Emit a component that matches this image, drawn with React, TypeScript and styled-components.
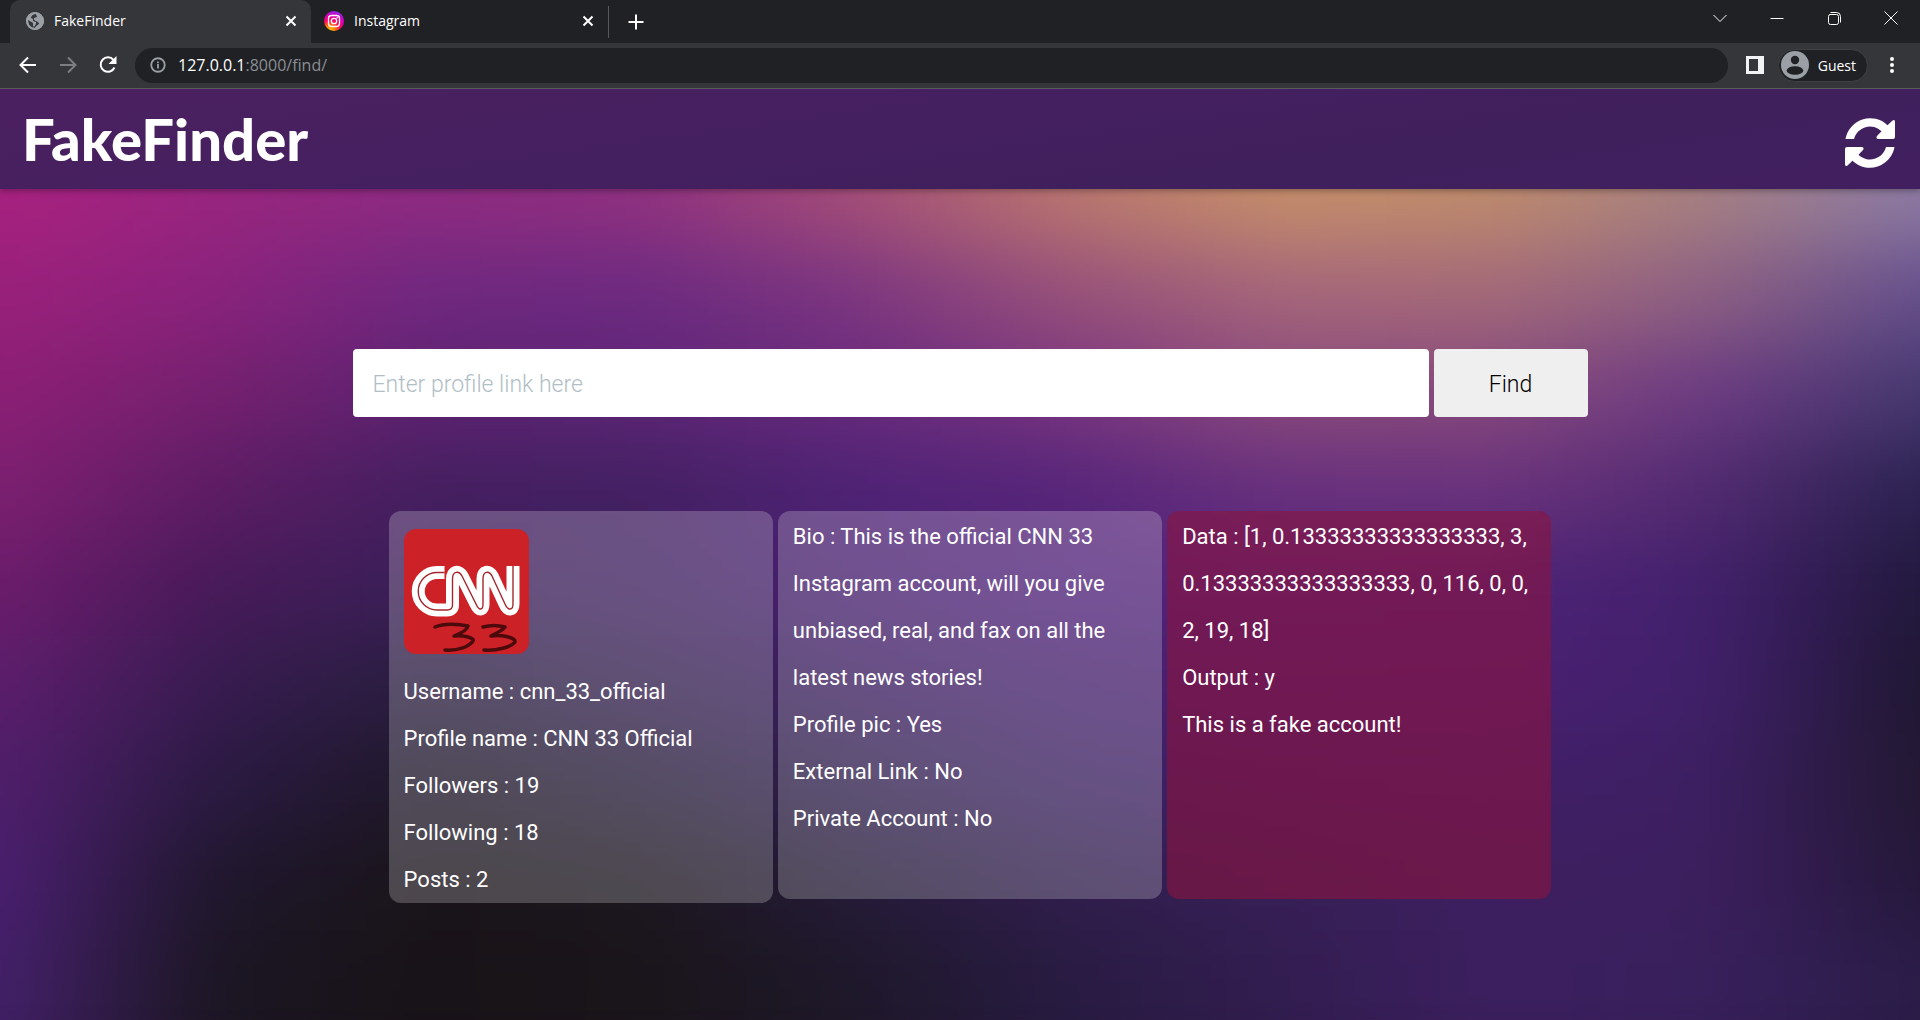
import React from "react";
import styled, { createGlobalStyle } from "styled-components";

const bodyFont = `Roboto, sans-serif`;
const chromeFont = `"Open Sans", "Noto Sans", sans-serif`;

const GlobalStyle = createGlobalStyle`
  *, *::before, *::after { box-sizing: border-box; }
  body { margin: 0; background: #19141a; color: #fff; font-family: ${bodyFont}; }
  button, input { font: inherit; }
`;

const Screen = styled.div`
  display: flex;
  flex-direction: column;
  min-height: 100vh;
`;

const TabStrip = styled.div`
  display: flex;
  align-items: center;
  height: 43px;
  padding-left: 10px;
  background: #202124;
  font-family: ${chromeFont};
`;

const Tab = styled.div<{ $active?: boolean }>`
  display: flex;
  align-items: center;
  gap: 10px;
  width: ${(p) => (p.$active ? 301 : 297)}px;
  height: 43px;
  padding: 0 10px 2px ${(p) => (p.$active ? 16 : 13)}px;
  border-radius: 10px 10px 0 0;
  background: ${(p) => (p.$active ? "#35363a" : "transparent")};
  font-size: 14px;
`;

const TabTitle = styled.span`
  flex: 1;
`;

const IconButton = styled.button<{ $w?: number }>`
  display: flex;
  align-items: center;
  justify-content: center;
  width: ${(p) => p.$w ?? 20}px;
  height: 36px;
  padding: 0;
  border: 0;
  background: none;
  color: #fff;
`;

const Divider = styled.div`
  width: 1px;
  height: 32px;
  background: #55575b;
`;

const WindowControls = styled.div`
  display: flex;
  align-self: flex-start;
  margin-left: auto;
`;

const Toolbar = styled.div`
  display: flex;
  align-items: center;
  height: 46px;
  padding: 0 8px 1px;
  background: #35363a;
  border-bottom: 1px solid #5a5b5f;
  font-family: ${chromeFont};
`;

const AddressBar = styled.div`
  display: flex;
  flex: 1;
  align-items: center;
  gap: 11px;
  height: 35px;
  margin: 0 14px 0 7px;
  padding: 0 14px;
  border-radius: 18px;
  background: #202124;
  color: #9aa0a6;
  font-size: 16px;
`;

const Host = styled.span`
  color: #fff;
`;

const Address = styled.a`
  color: #8b8f94;
  text-decoration: none;
`;

const GuestButton = styled.button`
  display: flex;
  align-items: center;
  gap: 9px;
  height: 33px;
  margin: 0 4px 0 10px;
  padding: 0 11px 0 2px;
  border: 1px solid #3f4043;
  border-radius: 17px;
  background: #202124;
  color: #fff;
  font-size: 14px;
`;

const Page = styled.div`
  position: relative;
  isolation: isolate;
  display: flex;
  flex: 1;
  flex-direction: column;
  overflow: hidden;
`;

const Backdrop = styled.div`
  position: absolute;
  inset: 8px -80px -57px;
  z-index: -1;
  display: flex;
  flex-direction: column;
  filter: blur(36px);
`;

const Band = styled.div<{ $colors: string }>`
  flex: 2;
  background: linear-gradient(to right, ${(p) => p.$colors});
  &:first-child, &:last-child { flex: 3; }
`;

const Header = styled.header`
  display: flex;
  align-items: center;
  justify-content: space-between;
  height: 100px;
  padding: 8px 25px 0 22px;
  background: linear-gradient(172deg, #4b2060 0%, #452060 40%, #3f1f5c 70%, #422060 100%);
  box-shadow: 0 2px 6px rgba(0, 0, 0, 0.3);
`;

const Brand = styled.h1`
  margin: 0;
  padding-bottom: 8px;
  font-family: Lato, sans-serif;
  font-size: 58px;
  font-weight: 900;
  line-height: 72px;
`;

const RefreshButton = styled(IconButton)`
  width: 50px;
  height: 50px;
`;

const Main = styled.main`
  display: flex;
  flex-direction: column;
  align-items: center;
  gap: 94px;
  padding: 160px 0 117px 20px;
`;

const SearchForm = styled.form`
  display: flex;
  gap: 5px;
  width: 65%;
  height: 68px;
  font-size: 23px;
  font-weight: 300;
`;

const LinkInput = styled.input`
  flex: 1;
  min-width: 0;
  padding: 2px 20px 0;
  border: 0;
  border-radius: 4px;
  background: #fff;
  color: #000;
  &::placeholder { color: #b0bec5; opacity: 1; }
`;

const FindButton = styled.button`
  width: 154px;
  padding: 2px 0 0;
  border: 0;
  border-radius: 4px;
  background: #efefef;
  color: #000;
`;

const Cards = styled.div`
  display: grid;
  grid-template-columns: repeat(3, 1fr);
  align-items: start;
  gap: 5px;
  width: 61.2%;
`;

const Card = styled.section<{ $alert?: boolean }>`
  min-height: 388px;
  padding: 2px 15px 0;
  border-radius: 12px;
  background: ${(p) => (p.$alert ? "rgba(139, 20, 64, 0.6)" : "rgba(255, 255, 255, 0.22)")};
  font-size: 22px;
  line-height: 47px;
`;

const Line = styled.p`
  margin: 0;
`;

const Picture = styled.svg`
  display: block;
  width: 125px;
  height: 125px;
  margin: 16px 0 14px;
  border-radius: 12px;
`;

const bands = [
  "#a8217f,#98257f,#8d2a80,#8f3080,#a34d78,#b8756f,#c48d6a,#bd8a6c,#a57f82,#8c7aa4",
  "#99207b,#8a227c,#6f287f,#6c2a80,#7c3580,#96507a,#a5657a,#a36979,#8c5f82,#654f8c",
  "#8c1f75,#75206f,#5d2270,#5d2577,#682a7c,#7a3580,#8a4a7c,#86497c,#6c3b82,#45386f",
  "#7d1f70,#5d1c64,#441f60,#432062,#4e2275,#56257a,#68307d,#6a327c,#512a70,#2a2250",
  "#6c1c6c,#471a58,#3a1f58,#3f2060,#482070,#50227a,#52247b,#4e2378,#42206c,#21183c",
  "#5c1d6c,#371b50,#281e3e,#331f4e,#3c1f60,#45206c,#4a2070,#4a2072,#40206a,#1f1732",
  "#501e6c,#2a1a42,#1e1728,#251b38,#30204e,#3b2060,#3f2066,#421f68,#3c1f62,#221831",
  "#4a1f70,#1f172d,#1a141a,#1c161f,#251b38,#301e4c,#371f56,#3d1f60,#3c1f5e,#24183a",
  "#44206a,#1b1623,#181317,#1a151a,#1e182a,#281b42,#321d50,#3c1f60,#38205c,#2a1c48",
].map((row) =>
  row
    .split(",")
    .map((color, i) => `${color} calc(80px + (100% - 160px) * ${i} / 9)`)
    .join(", "),
);

const Stroke = ({ d, size = 20, width = 2, color = "currentColor" }: { d: string; size?: number; width?: number; color?: string }) => (
  <svg width={size} height={size} viewBox="0 0 20 20" fill="none" stroke={color} strokeWidth={width} aria-hidden="true">
    <path d={d} />
  </svg>
);

const Globe = () => (
  <svg width="18" height="18" viewBox="0 0 18 18" aria-hidden="true">
    <circle cx="9" cy="9" r="9" fill="#9aa0a6" />
    <path d="M10 2c-3 0-5 2-5 4l2 1v2l3 1v2l-2 3-1-1v-3L2 8c0 5 3 8 7 8 1-3 4-3 4-5l-3-2-2-1V6l3-1z" fill="#35363a" />
    <circle cx="9" cy="9" r="8" fill="none" stroke="#9aa0a6" strokeWidth="2" />
  </svg>
);

const InstagramIcon = () => (
  <svg width="20" height="20" viewBox="0 0 20 20" fill="none" aria-hidden="true">
    <defs>
      <radialGradient id="ig" cx="0.3" cy="1" r="1.1">
        <stop offset="0" stopColor="#ffd600" />
        <stop offset="0.25" stopColor="#ff7a00" />
        <stop offset="0.5" stopColor="#ff0169" />
        <stop offset="0.75" stopColor="#d300c5" />
        <stop offset="1" stopColor="#7638fa" />
      </radialGradient>
    </defs>
    <circle cx="10" cy="10" r="10" fill="url(#ig)" />
    <rect x="4.5" y="4.5" width="11" height="11" rx="3" stroke="#fff" strokeWidth="1.3" />
    <circle cx="10" cy="10" r="2.7" stroke="#fff" strokeWidth="1.3" />
    <circle cx="13.2" cy="6.8" r="0.8" fill="#fff" />
  </svg>
);

const arrowPath = "M0.5 21A25 25 0 0 1 42.5 7.2L47.5 2.6Q50 1 50 4V19Q50 21 48 21H33Q30.5 20.5 32 18L36.5 13.3A16.5 16.5 0 0 0 9 21Z";

const RefreshIcon = () => (
  <svg width="50" height="50" viewBox="0 0 50 50" fill="#fff" aria-hidden="true">
    <path d={arrowPath} />
    <path d={arrowPath} transform="rotate(180 25 25)" />
  </svg>
);

const cnnPath = "M40.5 43.5H33a18.7 18.7 0 0 0 0 37.5H43Q48.500 81 48.5 76V50C48.5 42 55 41.5 58 47L72 75C75 82 79 81.5 79 75V50C79 42 85 41.5 88 47L101 75C104 82 109 81.5 109 75V37";

const ProfilePicture = () => (
  <Picture viewBox="0 0 125 125" role="img" aria-label="Profile picture" fill="none">
    <rect width="125" height="125" fill="#cc2127" />
    <path d={cnnPath} stroke="#fff" strokeWidth="13" />
    <path d={cnnPath} stroke="#a3262d" strokeWidth="1.4" />
    <g stroke="#4d0a0d" strokeWidth="3.5" strokeLinecap="round" strokeLinejoin="round">
      <path d="M31 98C40 94 55 95 64 97C63 102 55 105 50 107C60 106 71 109 69 112C65 118 53 122 41 121" />
      <path d="M79 98C86 96 94 96 101 98C98 102 91 105 87 107C98 105 112 109 111 113C107 118 93 122 80 121" />
    </g>
  </Picture>
);

const closeMark = "M5.5 5.5l9 9M14.5 5.5l-9 9";

export default function App() {
  return (
    <Screen>
      <GlobalStyle />
      <TabStrip>
        <Tab $active>
          <Globe />
          <TabTitle>FakeFinder</TabTitle>
          <IconButton aria-label="Close FakeFinder tab"><Stroke d={closeMark} /></IconButton>
        </Tab>
        <Tab>
          <InstagramIcon />
          <TabTitle>Instagram</TabTitle>
          <IconButton aria-label="Close Instagram tab"><Stroke d={closeMark} /></IconButton>
        </Tab>
        <Divider />
        <IconButton $w={54} aria-label="New tab"><Stroke d="M10 2.5v15M2.5 10h15" /></IconButton>
        <WindowControls>
          <IconButton $w={57} aria-label="Search tabs"><Stroke d="M3.5 7l6.5 6.5L16.5 7" width={1} /></IconButton>
          <IconButton $w={57} aria-label="Minimize"><Stroke d="M3.5 10.5h13" width={1} /></IconButton>
          <IconButton $w={57} aria-label="Restore"><Stroke d="M5.5 6.5h7q2 0 2 2v6q0 2-2 2h-6q-2 0-2-2v-6q0-2 2-2M6.5 4.5h6q4 0 4 4v6" width={1} /></IconButton>
          <IconButton $w={58} aria-label="Close window"><Stroke d="M3.5 3.5l13 13M16.5 3.5l-13 13" width={1} /></IconButton>
        </WindowControls>
      </TabStrip>
      <Toolbar>
        <IconButton $w={40} aria-label="Back"><Stroke d="M18 10H3M10 2.5L2.5 10L10 17.5" /></IconButton>
        <IconButton $w={40} aria-label="Forward"><Stroke d="M2 10h15M10 2.5L17.5 10L10 17.5" color="#7d7e82" /></IconButton>
        <IconButton $w={40} aria-label="Reload">
          <svg width="20" height="20" viewBox="0 0 20 20" aria-hidden="true">
            <path d="M16.5 12.5A7.2 7.2 0 1 1 15.5 5" fill="none" stroke="#fff" strokeWidth="2" />
            <path d="M18.5 1v8h-8z" fill="#fff" />
          </svg>
        </IconButton>
        <AddressBar>
          <Stroke d="M10 2.5a7.5 7.5 0 1 0 0 15a7.5 7.5 0 1 0 0-15M10 9v5M10 6v2" size={18} />
          <Address href="#find"><Host>127.0.0.1</Host>:8000/find/</Address>
        </AddressBar>
        <IconButton $w={26} aria-label="Side panel">
          <svg width="18" height="18" viewBox="0 0 18 18" aria-hidden="true">
            <path d="M0 0h18v18H0zM3 3v12h9V3z" fill="#f1f3f4" fillRule="evenodd" />
          </svg>
        </IconButton>
        <GuestButton>
          <svg width="28" height="28" viewBox="0 0 28 28" aria-hidden="true">
            <circle cx="14" cy="14" r="14" fill="#9aa0a6" />
            <circle cx="14" cy="9" r="4.2" fill="#202124" />
            <ellipse cx="14" cy="19.5" rx="8.3" ry="4.3" fill="#202124" />
          </svg>
          Guest
        </GuestButton>
        <IconButton $w={40} aria-label="Browser menu">
          <svg width="20" height="20" viewBox="0 0 20 20" fill="#fff" aria-hidden="true">
            <circle cx="10" cy="4" r="2" /><circle cx="10" cy="10" r="2" /><circle cx="10" cy="16" r="2" />
          </svg>
        </IconButton>
      </Toolbar>
      <Page>
        <Backdrop>
          {bands.map((colors) => <Band key={colors} $colors={colors} />)}
        </Backdrop>
        <Header>
          <Brand>FakeFinder</Brand>
          <RefreshButton aria-label="Refresh"><RefreshIcon /></RefreshButton>
        </Header>
        <Main>
          <SearchForm onSubmit={(e) => e.preventDefault()}>
            <LinkInput type="text" aria-label="Profile link" placeholder="Enter profile link here" />
            <FindButton type="submit">Find</FindButton>
          </SearchForm>
          <Cards>
            <Card>
              <ProfilePicture />
              <Line>Username : cnn_33_official</Line>
              <Line>Profile name : CNN 33 Official</Line>
              <Line>Followers : 19</Line>
              <Line>Following : 18</Line>
              <Line>Posts : 2</Line>
            </Card>
            <Card>
              <Line>Bio : This is the official CNN 33 Instagram account, will you give unbiased, real, and fax on all the latest news stories!</Line>
              <Line>Profile pic : Yes</Line>
              <Line>External Link : No</Line>
              <Line>Private Account : No</Line>
            </Card>
            <Card $alert>
              <Line>Data : [1, 0.13333333333333333, 3, 0.13333333333333333, 0, 116, 0, 0, 2, 19, 18]</Line>
              <Line>Output : y</Line>
              <Line>This is a fake account!</Line>
            </Card>
          </Cards>
        </Main>
      </Page>
    </Screen>
  );
}
